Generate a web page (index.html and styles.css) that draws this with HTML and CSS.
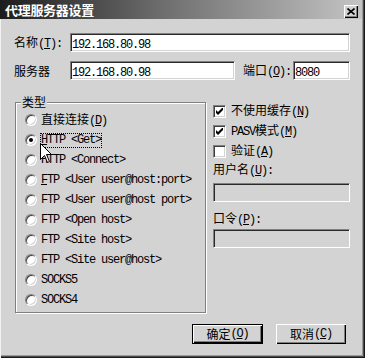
FILE: index.html
```html
<!DOCTYPE html>
<html lang="zh-CN">
<head>
<meta charset="utf-8">
<link rel="stylesheet" href="styles.css">
</head>
<body>
<div class="window">
  <div class="titlebar">
    <span class="title">代理服务器设置</span>
    <span class="close"><svg width="8" height="7" viewBox="0 0 8 7"><path d="M0.5 0.5 L7.5 6.5 M7.5 0.5 L0.5 6.5" stroke="#000" stroke-width="1.6" fill="none"/></svg></span>
  </div>
  <div class="content">
    <div class="row">
      <span class="lbl">名称<span class="en">(<u>T</u>):</span></span>
      <div class="field wide"><span class="en">192.168.80.98</span></div>
    </div>
    <div class="row row2">
      <span class="lbl">服务器</span>
      <div class="field server"><span class="en">192.168.80.98</span></div>
      <span class="lbl port-lbl">端口<span class="en">(<u>O</u>):</span></span>
      <div class="field port"><span class="en">8080</span></div>
    </div>
    <div class="main">
      <fieldset class="group">
        <legend>类型</legend>
        <div class="opt"><span class="radio"></span><span>直接连接<span class="en">(<u>D</u>)</span></span></div>
        <div class="opt"><span class="radio on"></span><span class="en focus"><u>H</u>TTP &lt;Get&gt;</span></div>
        <div class="opt"><span class="radio"></span><span class="en">HTTP &lt;Connect&gt;</span></div>
        <div class="opt"><span class="radio"></span><span class="en"><u>F</u>TP &lt;User user@host:port&gt;</span></div>
        <div class="opt"><span class="radio"></span><span class="en">FTP &lt;User user@host port&gt;</span></div>
        <div class="opt"><span class="radio"></span><span class="en">FTP &lt;Open host&gt;</span></div>
        <div class="opt"><span class="radio"></span><span class="en">FTP &lt;Site host&gt;</span></div>
        <div class="opt"><span class="radio"></span><span class="en">FTP &lt;Site user@host&gt;</span></div>
        <div class="opt"><span class="radio"></span><span class="en">SOCKS5</span></div>
        <div class="opt"><span class="radio"></span><span class="en">SOCKS4</span></div>
      </fieldset>
      <div class="side">
        <div class="chk-row"><span class="chk"><svg width="7" height="7" viewBox="0 0 7 7"><path d="M0 2 L2 4 L7 -1 L7 2 L2 7 L0 5 Z" fill="#000"/></svg></span><span>不使用缓存<span class="en">(<u>N</u>)</span></span></div>
        <div class="chk-row"><span class="chk"><svg width="7" height="7" viewBox="0 0 7 7"><path d="M0 2 L2 4 L7 -1 L7 2 L2 7 L0 5 Z" fill="#000"/></svg></span><span><span class="en">PASV</span>模式<span class="en">(<u>M</u>)</span></span></div>
        <div class="chk-row"><span class="chk"></span><span>验证<span class="en">(<u>A</u>)</span></span></div>
        <div class="side-lbl">用户名<span class="en">(<u>U</u>):</span></div>
        <div class="field dis user"></div>
        <div class="side-lbl pw-lbl">口令<span class="en">(<u>P</u>):</span></div>
        <div class="field dis pw"></div>
      </div>
    </div>
    <div class="buttons">
      <div class="btn default">确定<span class="en">(<u>O</u>)</span></div>
      <div class="btn">取消<span class="en">(<u>C</u>)</span></div>
    </div>
  </div>
  <svg class="cursor" width="13" height="21" viewBox="0 0 13 21"><path d="M0.5 0.5 V16.5 L4.5 12.5 L7.5 19.5 L9.5 18.5 L6.5 11.5 H11.5 Z" fill="#fff" stroke="#000" stroke-width="1" stroke-linejoin="miter"/></svg>
</div>
</body>
</html>
```

FILE: styles.css
```css
* { box-sizing: border-box; }
body {
  margin: 0;
  background: #d3d3d3;
  font: 12px/16px "Noto Sans CJK SC", sans-serif;
  color: #000;
}
.window {
  position: relative;
  width: 365px;
  height: 358px;
  background: #d3d3d3;
  box-shadow: inset 1px 0 0 #f2f2f2, inset -1px -1px 0 #1a1a1a, inset -2px -2px 0 #4a4a4a, inset -3px -3px 0 #9a9a9a;
  overflow: hidden;
}
.titlebar {
  height: 19px;
  margin-right: 3px;
  background: linear-gradient(90deg, #1c1c1c 0%, #6e6e6e 45%, #c4c4c4 100%);
  display: flex;
  justify-content: space-between;
  align-items: flex-start;
  padding: 0 4px 0 5px;
}
.title {
  color: #fff;
  font-weight: 700;
  font-size: 13px;
  line-height: 19px;
  letter-spacing: -0.3px;
}
.close {
  margin-top: 5px;
  width: 14px;
  height: 13px;
  background: #d3d3d3;
  box-shadow: inset 1px 1px 0 #fff, inset -1px -1px 0 #000, inset -2px -2px 0 #808080;
  display: flex;
  align-items: center;
  justify-content: center;
  padding-bottom: 1px;
}
.en {
  font-family: "Liberation Mono", monospace;
  letter-spacing: -1.2px;
}
.content {
  padding: 14px 15px 0 14px;
}
.row {
  display: flex;
  align-items: center;
  height: 19px;
}
.row2 { margin-top: 9px; }
.lbl {
  width: 56px;
  flex: none;
  white-space: nowrap;
}
.field {
  height: 19px;
  background: #fff;
  border: 1px solid;
  border-color: #808080 #fff #fff #808080;
  box-shadow: inset 1px 1px 0 #2a2a2a, inset -1px -1px 0 #d3d3d3;
  padding: 0 2px 0 1px;
  line-height: 17px;
  white-space: nowrap;
}
.wide { flex: 1; }
.server { width: 165px; flex: none; }
.port-lbl { width: 50px; margin-left: 8px; }
.port { width: 57px; flex: none; }
.main {
  display: grid;
  grid-template-columns: 191px 137px;
  column-gap: 7px;
  margin-top: 15px;
  padding-left: 1px;
}
.group {
  margin: 0;
  padding: 1px 0 2px 9px;
  border: 1px solid #808080;
  box-shadow: inset 1px 1px 0 #fff, 1px 1px 0 #fff;
  min-width: 0;
}
.group legend {
  padding: 0 1px;
  margin-left: -4px;
  line-height: 14px;
  background: #d3d3d3;
}
.opt {
  display: flex;
  align-items: center;
  height: 20px;
  white-space: nowrap;
}
.radio {
  position: relative;
  flex: none;
  width: 12px;
  height: 12px;
  border-radius: 50%;
  background: #fff;
  border: 1px solid;
  border-color: #808080 #fff #fff #808080;
  box-shadow: inset 1px 1px 0 #404040, inset -1px -1px 0 #d3d3d3;
  margin-right: 4px;
}
.radio.on::after {
  content: "";
  position: absolute;
  left: 3px;
  top: 3px;
  width: 4px;
  height: 4px;
  border-radius: 50%;
  background: #000;
}
.focus {
  display: inline-block;
  line-height: 13px;
  outline: 1px dotted #000;
}
.side { padding-top: 6px; }
.chk-row {
  display: flex;
  align-items: center;
  height: 20px;
  white-space: nowrap;
}
.chk {
  flex: none;
  width: 13px;
  height: 13px;
  background: #fff;
  border: 1px solid;
  border-color: #808080 #fff #fff #808080;
  box-shadow: inset 1px 1px 0 #404040, inset -1px -1px 0 #d3d3d3;
  margin-right: 5px;
  display: flex;
  align-items: center;
  justify-content: center;
}
.side-lbl {
  height: 16px;
  line-height: 16px;
  white-space: nowrap;
}
.field.dis { background: #d3d3d3; }
.user { margin-top: 6px; }
.pw-lbl { margin-top: 8px; }
.pw { margin-top: 3px; }
.buttons {
  display: flex;
  justify-content: flex-end;
  gap: 13px;
  margin-top: 11px;
  padding-right: 4px;
}
.btn {
  width: 70px;
  height: 20px;
  display: flex;
  align-items: center;
  justify-content: center;
  background: #d3d3d3;
  box-shadow: inset 1px 1px 0 #fff, inset -1px -1px 0 #000, inset -2px -2px 0 #808080;
  white-space: nowrap;
}
.btn.default {
  width: 71px;
  border: 1px solid #000;
}
.cursor {
  position: absolute;
  left: 40px;
  top: 143px;
}
```
